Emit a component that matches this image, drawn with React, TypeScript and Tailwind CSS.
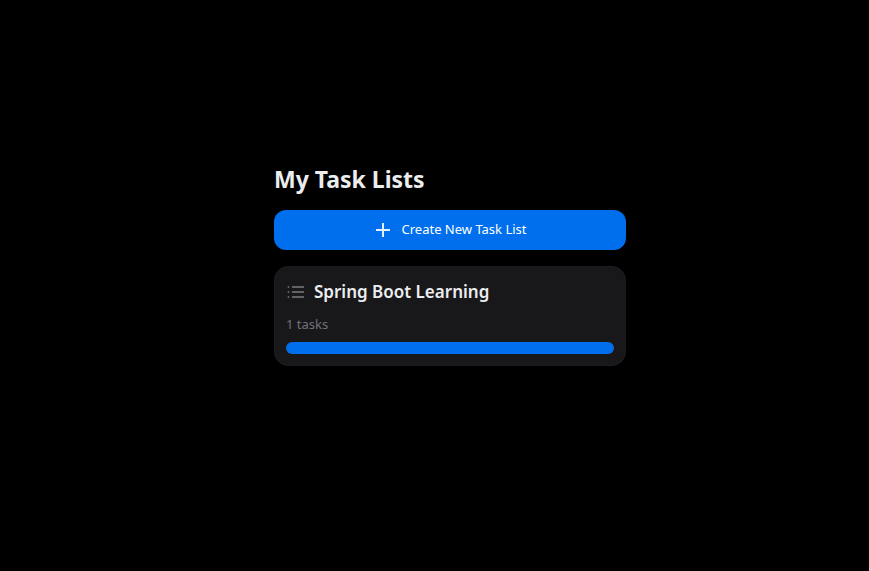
import React from "react";

type TaskList = { id: number; title: string; count: number; progress: number };

const taskLists: TaskList[] = [
  { id: 1, title: "Spring Boot Learning", count: 1, progress: 100 },
];

function PlusIcon() {
  return (
    <svg viewBox="0 0 20 20" className="size-5 text-[#e3effd]" fill="none" stroke="currentColor" strokeWidth={2} aria-hidden="true">
      <path d="M3 10h14M10 3v14" />
    </svg>
  );
}

function ListIcon() {
  return (
    <svg viewBox="0 0 20 20" className="size-5 text-[#626264]" fill="none" stroke="currentColor" strokeWidth={2} aria-hidden="true">
      <path d="M6 5h12M6 10h12M6 15h12" />
      <path d="M1.7 5h1.5M1.7 10h1.5M1.7 15h1.5" />
    </svg>
  );
}

function TaskListCard({ list }: { list: TaskList }) {
  return (
    <article className="rounded-[14px] border border-[#1c1c1f] bg-[#18181b] p-[11px]">
      <div className="flex h-7 items-center gap-2">
        <ListIcon />
        <h2 className="text-[17px] leading-7 font-semibold text-[#ecedee]">{list.title}</h2>
      </div>
      <p className="mt-2 text-[13px] leading-5 text-[#71717a]">{list.count} tasks</p>
      <div
        role="progressbar"
        aria-label={`${list.title} progress`}
        aria-valuenow={list.progress}
        className="mt-2 h-3 overflow-hidden rounded-full bg-[#3f3f46]"
      >
        <div className="h-full rounded-full bg-[#006fee]" style={{ width: `${list.progress}%` }} />
      </div>
    </article>
  );
}

export default function App() {
  return (
    <div className="min-h-screen bg-black pt-[163px] pl-[31px] font-['Noto_Sans','Open_Sans',sans-serif] text-[#ecedee]">
      <main className="mx-auto w-full max-w-[352px]">
        <h1 className="text-[23px] leading-8 font-bold">My Task Lists</h1>
        <button
          type="button"
          className="mt-[15px] flex h-10 w-full items-center justify-center gap-2 rounded-xl bg-[#006fee] text-[13px] text-white"
        >
          <PlusIcon />
          Create New Task List
        </button>
        <section className="mt-4 flex flex-col gap-4">
          {taskLists.map((list) => (
            <TaskListCard key={list.id} list={list} />
          ))}
        </section>
      </main>
    </div>
  );
}
